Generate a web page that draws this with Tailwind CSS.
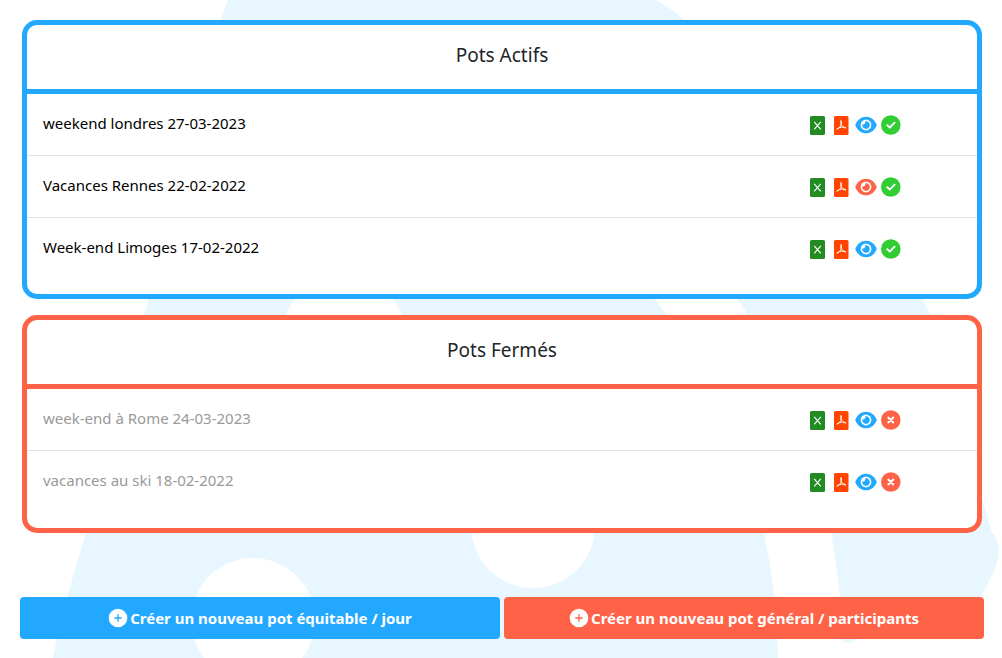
<!DOCTYPE html>
<html lang="fr">
<head>
  <meta charset="UTF-8">
  <meta name="viewport" content="width=device-width, initial-scale=1.0">
  <title>Mes pots</title>
  <script src="https://cdn.jsdelivr.net/npm/@tailwindcss/browser@4"></script>
</head>
<body class="relative min-h-screen overflow-x-hidden bg-white font-['Noto_Sans',sans-serif] text-[15px] leading-6 text-black">

  <!-- Icons -->
  <svg class="hidden">
    <symbol id="excel" viewBox="0 0 25 24">
      <rect x="7" y="3" width="15" height="19" rx="1.500" fill="#228b22"/>
      <path d="M11.200 8.800l6.600 7.600M17.800 8.800l-6.600 7.600" stroke="#fff" stroke-width="1.100" fill="none"/>
    </symbol>
    <symbol id="pdf" viewBox="0 0 25 24">
      <rect x="6" y="3" width="14.500" height="19" rx="1.500" fill="#ff4500"/>
      <path d="M13 7.500c.6 2.300.3 4.500-.9 6.300-.9 1.300-2.100 2-3.300 2.300M13 8.500c-.3 2.300.2 3.600 1.400 4.700 1 1 2 1.600 3.200 1.900M9.500 15.600c2.200-1.500 5-2 7.800-1.200" stroke="#fff" stroke-width="1" stroke-linecap="round" fill="none"/>
    </symbol>
    <symbol id="eye" viewBox="0 0 25 24">
      <path fill="currentColor" d="M2.200 12C4.300 6.700 8.200 3.700 13 3.700S21.700 6.700 23.800 12C21.700 17.300 17.800 20.300 13 20.300S4.300 17.300 2.200 12z"/>
      <circle cx="13" cy="12" r="5.400" fill="#fff"/>
      <path fill="currentColor" d="M13 8.200a3.800 3.800 0 1 1-3.700 3 2.200 2.200 0 0 0 2.900-2.900z"/>
    </symbol>
    <symbol id="check" viewBox="0 0 25 24">
      <circle cx="12.800" cy="12" r="9.800" fill="#32cd32"/>
      <path d="M9.200 12.200l2.500 2.500 4.900-5" stroke="#fff" stroke-width="1.900" stroke-linecap="round" stroke-linejoin="round" fill="none"/>
    </symbol>
    <symbol id="cross" viewBox="0 0 25 24">
      <circle cx="12.800" cy="12" r="9.800" fill="#ff6347"/>
      <path d="M10.300 9.500l5 5M15.300 9.500l-5 5" stroke="#fff" stroke-width="1.900" stroke-linecap="round" fill="none"/>
    </symbol>
    <symbol id="plus" viewBox="0 0 20 20">
      <circle cx="10" cy="10" r="9.300" fill="#fff"/>
      <path d="M10 6.300v7.400M6.300 10h7.400" stroke="currentColor" stroke-width="1.300" fill="none"/>
    </symbol>
  </svg>

  <!-- Background drawing -->
  <svg class="absolute inset-0 -z-10 h-full w-full" viewBox="0 0 1002 658" preserveAspectRatio="xMidYMin slice" aria-hidden="true">
    <g fill="#e8f7ff">
      <path d="M228 0H656Q671 8 684 20L740 100H180Q207 60 228 0z"/>
      <path d="M155 280Q149 296 144 315L86 533Q62 610 53 658H778Q776 590 764 533Q735 410 667 315L640 280z"/>
      <path d="M728 280Q738 301 748 315Q810 420 831 533Q836 560 840 597L842 640Q846 646 856 640Q940 630 980 597Q998 570 999 550Q997 535 992 533L930 315L914 280z"/>
    </g>
    <g fill="#fff">
      <circle cx="344" cy="337" r="62"/>
      <circle cx="533" cy="526" r="62"/>
      <circle cx="253" cy="620" r="62"/>
    </g>
  </svg>

  <main class="pt-5 pr-[18px] pb-4 pl-5">

    <!-- Pots actifs -->
    <section class="mx-[2px] mb-4 overflow-hidden rounded-[15px] border-5 border-[#22a9ff] bg-white pb-[14px]">
      <h2 class="border-b-5 border-[#22a9ff] pt-4 pb-5 text-center text-[19px] leading-7 text-[#212529]">Pots Actifs</h2>
      <table class="w-full table-fixed border-separate border-spacing-0">
        <tbody>
          <tr class="h-[62px]">
            <td class="w-4/5 border-b border-[#dee2e6] px-4 pb-1"><a href="#">weekend londres 27-03-2023</a></td>
            <td class="border-b border-[#dee2e6] px-4">
              <div class="flex">
                <a href="#" aria-label="Excel"><svg class="h-6 w-[25px]"><use href="#excel"/></svg></a>
                <a href="#" aria-label="PDF"><svg class="h-6 w-[25px]"><use href="#pdf"/></svg></a>
                <a href="#" aria-label="Voir" class="text-[#22a9ff]"><svg class="h-6 w-[25px]"><use href="#eye"/></svg></a>
                <a href="#" aria-label="Fermer"><svg class="h-6 w-[25px]"><use href="#check"/></svg></a>
              </div>
            </td>
          </tr>
          <tr class="h-[62px]">
            <td class="border-b border-[#dee2e6] px-4 pb-1"><a href="#">Vacances Rennes 22-02-2022</a></td>
            <td class="border-b border-[#dee2e6] px-4">
              <div class="flex">
                <a href="#" aria-label="Excel"><svg class="h-6 w-[25px]"><use href="#excel"/></svg></a>
                <a href="#" aria-label="PDF"><svg class="h-6 w-[25px]"><use href="#pdf"/></svg></a>
                <a href="#" aria-label="Voir" class="text-[#ff6347]"><svg class="h-6 w-[25px]"><use href="#eye"/></svg></a>
                <a href="#" aria-label="Fermer"><svg class="h-6 w-[25px]"><use href="#check"/></svg></a>
              </div>
            </td>
          </tr>
          <tr class="h-[62px]">
            <td class="px-4 pb-1"><a href="#">Week-end Limoges 17-02-2022</a></td>
            <td class="px-4">
              <div class="flex">
                <a href="#" aria-label="Excel"><svg class="h-6 w-[25px]"><use href="#excel"/></svg></a>
                <a href="#" aria-label="PDF"><svg class="h-6 w-[25px]"><use href="#pdf"/></svg></a>
                <a href="#" aria-label="Voir" class="text-[#22a9ff]"><svg class="h-6 w-[25px]"><use href="#eye"/></svg></a>
                <a href="#" aria-label="Fermer"><svg class="h-6 w-[25px]"><use href="#check"/></svg></a>
              </div>
            </td>
          </tr>
        </tbody>
      </table>
    </section>

    <!-- Pots fermés -->
    <section class="mx-[2px] mb-16 overflow-hidden rounded-[15px] border-5 border-[#ff6347] bg-white pb-[15px]">
      <h2 class="border-b-5 border-[#ff6347] pt-4 pb-5 text-center text-[19px] leading-7 text-[#212529]">Pots Fermés</h2>
      <table class="w-full table-fixed border-separate border-spacing-0">
        <tbody>
          <tr class="h-[62px]">
            <td class="w-4/5 border-b border-[#dee2e6] px-4 pb-1 text-[#999]"><a href="#">week-end à Rome 24-03-2023</a></td>
            <td class="border-b border-[#dee2e6] px-4">
              <div class="flex">
                <a href="#" aria-label="Excel"><svg class="h-6 w-[25px]"><use href="#excel"/></svg></a>
                <a href="#" aria-label="PDF"><svg class="h-6 w-[25px]"><use href="#pdf"/></svg></a>
                <a href="#" aria-label="Voir" class="text-[#22a9ff]"><svg class="h-6 w-[25px]"><use href="#eye"/></svg></a>
                <a href="#" aria-label="Rouvrir"><svg class="h-6 w-[25px]"><use href="#cross"/></svg></a>
              </div>
            </td>
          </tr>
          <tr class="h-[62px]">
            <td class="px-4 pb-1 text-[#999]"><a href="#">vacances au ski 18-02-2022</a></td>
            <td class="px-4">
              <div class="flex">
                <a href="#" aria-label="Excel"><svg class="h-6 w-[25px]"><use href="#excel"/></svg></a>
                <a href="#" aria-label="PDF"><svg class="h-6 w-[25px]"><use href="#pdf"/></svg></a>
                <a href="#" aria-label="Voir" class="text-[#22a9ff]"><svg class="h-6 w-[25px]"><use href="#eye"/></svg></a>
                <a href="#" aria-label="Rouvrir"><svg class="h-6 w-[25px]"><use href="#cross"/></svg></a>
              </div>
            </td>
          </tr>
        </tbody>
      </table>
    </section>

    <!-- Boutons -->
    <div class="grid grid-cols-2 gap-1">
      <button type="button" class="flex h-[42px] items-center justify-center gap-[2px] rounded bg-[#22a9ff] font-bold text-white">
        <svg class="size-5 text-[#22a9ff]"><use href="#plus"/></svg>
        Créer un nouveau pot équitable / jour
      </button>
      <button type="button" class="flex h-[42px] items-center justify-center gap-[2px] rounded bg-[#ff6347] font-bold text-white">
        <svg class="size-5 text-[#ff6347]"><use href="#plus"/></svg>
        Créer un nouveau pot général / participants
      </button>
    </div>
  </main>
</body>
</html>
